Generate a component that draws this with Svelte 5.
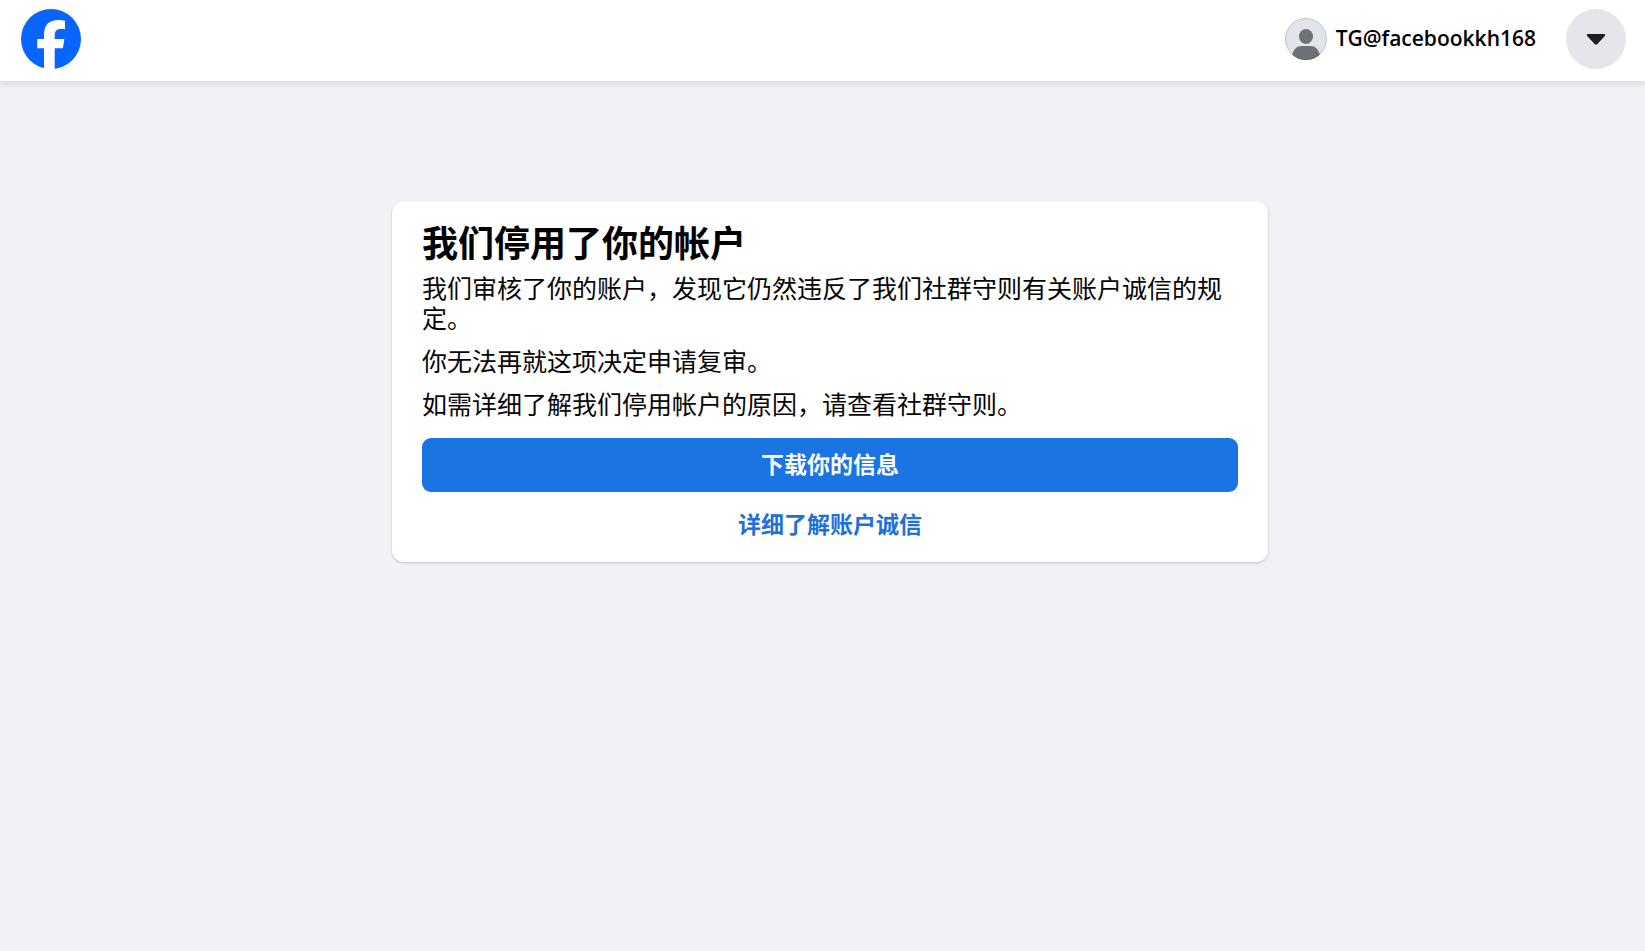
<script lang="ts">
const username = 'TG@facebookkh168';

const paragraphs = [
  '我们审核了你的账户，发现它仍然违反了我们社群守则有关账户诚信的规定。',
  '你无法再就这项决定申请复审。',
  '如需详细了解我们停用帐户的原因，请查看社群守则。',
];
</script>

<svelte:head>
  <title>Facebook</title>
</svelte:head>

<header class="topbar">
  <a class="logo" href="/" aria-label="Facebook">
    <svg viewBox="0 0 60 60" aria-hidden="true">
      <circle cx="30" cy="30" r="30" fill="#0866ff" />
      <path
        fill="#fff"
        d="M23 60V39.300H16.300V30H23V26.200C23 15.800 28 11 37.500 11C39.900 11 42.500 11.300 44 11.700V20.200C43 20.100 41.600 20 40 20C35.500 20 33.700 22 33.700 26.500V30H43.400L41.900 39.300H33.700V60Z"
      />
    </svg>
  </a>

  <div class="account">
    <a class="profile" href="/me">
      <svg class="avatar" viewBox="0 0 42 42" aria-hidden="true">
        <defs>
          <clipPath id="avatar-clip"><circle cx="21" cy="21" r="21" /></clipPath>
        </defs>
        <g clip-path="url(#avatar-clip)">
          <rect width="42" height="42" fill="#e1e4e8" />
          <ellipse cx="21" cy="18.500" rx="7" ry="7.500" fill="#6e7176" />
          <path fill="#6e7176" d="M6.500 42C7 32.500 10.500 28 17 28H25C31.500 28 35 32.500 35.500 42Z" />
        </g>
        <circle cx="21" cy="21" r="20.500" fill="none" stroke="#000" stroke-opacity=".14" />
      </svg>
      <span class="username">{username}</span>
    </a>
    <button class="menu" type="button" aria-label="账户菜单">
      <svg viewBox="0 0 20 12" aria-hidden="true">
        <path
          fill="#1c1e21"
          d="M1.800 1H18.200C19.200 1 19.500 2.200 18.800 3L11.400 11C10.600 11.900 9.400 11.900 8.600 11L1.200 3C.5 2.200.8 1 1.800 1Z"
        />
      </svg>
    </button>
  </div>
</header>

<main class="page">
  <section class="card">
    <h1>我们停用了你的帐户</h1>
    <div class="message">
      {#each paragraphs as text}
        <p>{text}</p>
      {/each}
    </div>
    <div class="actions">
      <button class="download" type="button">下载你的信息</button>
      <a class="learn-more" href="/help">详细了解账户诚信</a>
    </div>
  </section>
</main>

<style>
:global(body) {
    background-color: #f0f2f5;
    font-family: "Noto Sans CJK SC", sans-serif;
    color: #050505;
}

.topbar {
    display: flex;
    align-items: center;
    justify-content: space-between;
    padding: 9px 19px 12px 21px;
    background-color: #fff;
    box-shadow: 0 3px 6px rgba(0, 0, 0, 0.1);
}

.logo,
.logo svg {
    display: block;
    width: 60px;
    height: 60px;
}

.account {
    display: flex;
    align-items: center;
    gap: 30px;
}

.profile {
    display: flex;
    align-items: center;
    gap: 9px;
    color: #000;
    text-decoration: none;
}

.avatar {
    width: 42px;
    height: 42px;
}

.username {
    padding-bottom: 2px;
    font-family: "Open Sans", "Noto Sans", sans-serif;
    font-size: 21px;
    font-weight: 600;
    line-height: 30px;
}

.menu {
    display: grid;
    place-items: center;
    width: 60px;
    height: 60px;
    padding: 0;
    border: 0;
    border-radius: 50%;
    background-color: #e4e6eb;
    cursor: pointer;
}

.menu svg {
    width: 20px;
    height: 12px;
}

.page {
    display: flex;
    justify-content: center;
    padding: 120px 0 48px 15px;
}

.card {
    box-sizing: border-box;
    width: 100%;
    max-width: 876px;
    padding: 22px 30px 14px;
    border-radius: 12px;
    background-color: #fff;
    box-shadow: 0 1px 3px rgba(0, 0, 0, 0.2);
}

h1 {
    margin: 0 0 13px;
    font-size: 36px;
    font-weight: 700;
    line-height: 36px;
    color: #000;
}

.message {
    display: flex;
    flex-direction: column;
    gap: 13px;
    font-size: 25px;
    line-height: 30px;
}

p {
    margin: 0;
}

.actions {
    display: flex;
    flex-direction: column;
    gap: 6px;
    margin-top: 20px;
    font-size: 23px;
    font-weight: 700;
    line-height: 50px;
    text-align: center;
}

.download {
    padding: 0 0 4px;
    border: 0;
    border-radius: 9px;
    background-color: #1b74e4;
    color: #fff;
    font: inherit;
    cursor: pointer;
}

.learn-more {
    color: #216fdb;
    text-decoration: none;
}
</style>
